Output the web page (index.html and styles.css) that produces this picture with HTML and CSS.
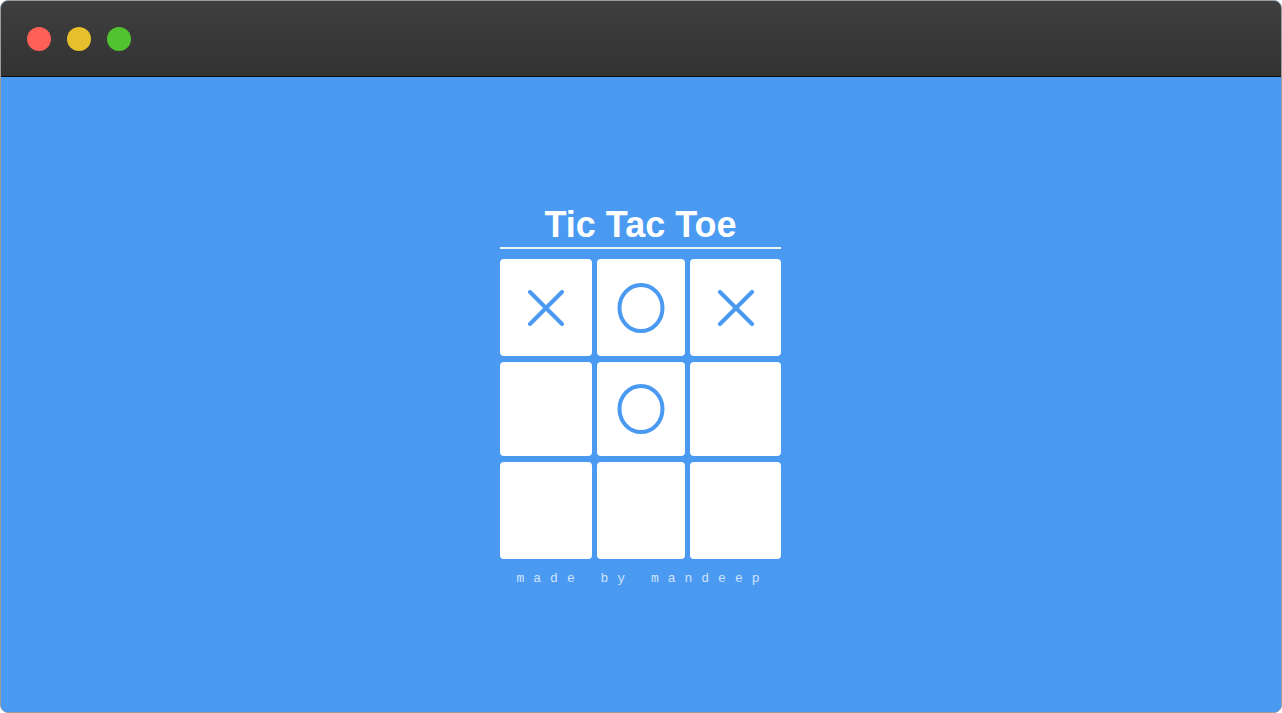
FILE: index.html
```html
<!DOCTYPE html>
<html lang="en">
<head>
<meta charset="utf-8">
<title>Tic Tac Toe</title>
<link rel="stylesheet" href="styles.css">
</head>
<body>
<div class="window">
  <div class="titlebar">
    <span class="dot dot-red"></span>
    <span class="dot dot-yellow"></span>
    <span class="dot dot-green"></span>
  </div>
  <main class="stage">
    <div class="game">
      <h1 class="title">Tic Tac Toe</h1>
      <div class="board">
        <div class="cell row-a"><svg class="mark-x" viewBox="0 0 36 36"><path d="M2 2 L34 34 M34 2 L2 34"/></svg></div>
        <div class="cell row-a"><svg class="mark-o" viewBox="0 0 48 50"><ellipse cx="24" cy="25" rx="21.5" ry="23"/></svg></div>
        <div class="cell row-a"><svg class="mark-x" viewBox="0 0 36 36"><path d="M2 2 L34 34 M34 2 L2 34"/></svg></div>
        <div class="cell row-b"></div>
        <div class="cell row-b"><svg class="mark-o" viewBox="0 0 48 50"><ellipse cx="24" cy="25" rx="21.5" ry="23"/></svg></div>
        <div class="cell row-b"></div>
        <div class="cell row-c"></div>
        <div class="cell row-c"></div>
        <div class="cell row-c"></div>
      </div>
      <p class="credit">made by mandeep</p>
    </div>
  </main>
</div>
</body>
</html>
```

FILE: styles.css
```css
* { box-sizing: border-box; }

html, body {
  margin: 0;
  padding: 0;
  background: #ffffff;
}

.window {
  width: 1282px;
  height: 713px;
  border: 1px solid #9c9c9c;
  border-radius: 8px;
  overflow: hidden;
  display: flex;
  flex-direction: column;
  background: #4a9af2;
}

.titlebar {
  height: 76px;
  flex: 0 0 76px;
  background: linear-gradient(#3f3f3f, #323232);
  border-bottom: 1px solid #0e0e0e;
  display: flex;
  align-items: flex-start;
  gap: 16px;
  padding-left: 26px;
  padding-top: 26px;
}

.dot {
  width: 24px;
  height: 24px;
  border-radius: 50%;
  display: block;
}
.dot-red { background: #fe5f57; }
.dot-yellow { background: #e6bf2c; }
.dot-green { background: #51c230; }

.stage {
  flex: 1;
  display: flex;
  align-items: center;
  justify-content: center;
  background: #4a9af2;
  padding-right: 1px;
}

.game {
  width: 281px;
  display: flex;
  flex-direction: column;
  align-items: stretch;
}

.title {
  margin: 0;
  font-family: "Liberation Sans", Arial, sans-serif;
  font-weight: 700;
  font-size: 36px;
  line-height: 40px;
  padding-top: 2px;
  padding-bottom: 2px;
  color: #ffffff;
  text-align: center;
  border-bottom: 2px solid #eef5fe;
}

.board {
  margin-top: 10px;
  display: grid;
  grid-template-columns: 92px 88px 91px;
  grid-template-rows: 97px 94px 97px;
  column-gap: 5px;
  row-gap: 6px;
}

.cell {
  background: #ffffff;
  border-radius: 4px;
  display: flex;
  align-items: center;
  justify-content: center;
}

.mark-x {
  width: 36px;
  height: 36px;
  fill: none;
  stroke: #4a9af2;
  stroke-width: 4;
  stroke-linecap: round;
}

.mark-o {
  width: 48px;
  height: 50px;
  fill: none;
  stroke: #4a9af2;
  stroke-width: 4;
}

.credit {
  margin: 13px 0 0 0;
  font-family: "Liberation Mono", "Courier New", monospace;
  font-size: 13px;
  line-height: 14px;
  letter-spacing: 9px;
  color: rgba(255, 255, 255, 0.75);
  text-align: center;
  padding-left: 4px;
}
```
